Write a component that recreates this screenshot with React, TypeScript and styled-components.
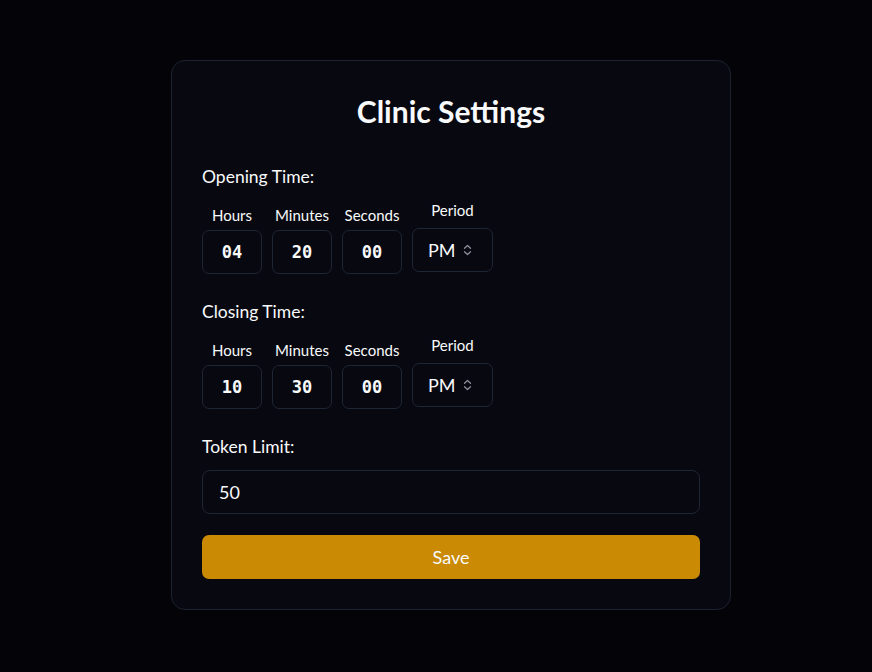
import React from "react";
import styled, { createGlobalStyle } from "styled-components";

const GlobalStyle = createGlobalStyle`
  html, body {
    margin: 0;
    padding: 0;
    background: #040408;
    font-family: Lato, "Noto Sans", sans-serif;
    color: #f8fafc;
  }
`;

const Page = styled.div`
  display: flex;
  justify-content: center;
  align-items: flex-start;
  padding: 60px 0 0 30px;
  min-height: 672px;
  box-sizing: border-box;
`;

const Card = styled.div`
  width: 560px;
  box-sizing: border-box;
  padding: 30px;
  background: #080810;
  border: 1px solid #1c2230;
  border-radius: 14px;
  display: flex;
  flex-direction: column;
`;

const Title = styled.h1`
  margin: 0 0 34px;
  text-align: center;
  font-size: 30px;
  line-height: 40px;
  font-weight: 700;
`;

const Section = styled.div<{ $gap: number }>`
  display: flex;
  flex-direction: column;
  margin-bottom: ${(p) => p.$gap}px;
`;

const Label = styled.div`
  font-size: 17.5px;
  line-height: 24px;
`;

const TimeRow = styled.div`
  display: flex;
  gap: 10px;
  margin-top: 11px;
  align-items: flex-start;
`;

const Field = styled.div<{ $shift: number }>`
  display: flex;
  flex-direction: column;
  align-items: center;
  margin-top: ${(p) => p.$shift}px;
`;

const SmallLabel = styled.div<{ $space: number }>`
  font-size: 15px;
  line-height: 20px;
  margin-bottom: ${(p) => p.$space}px;
`;

const Box = styled.div`
  width: 60px;
  height: 44px;
  box-sizing: border-box;
  border: 1px solid #1e2533;
  border-radius: 7px;
  display: flex;
  align-items: center;
  justify-content: center;
  font-family: "DejaVu Sans Mono", monospace;
  font-size: 17px;
  font-weight: 700;
`;

const Select = styled.div`
  width: 81px;
  height: 44px;
  box-sizing: border-box;
  border: 1px solid #1e2533;
  border-radius: 7px;
  display: flex;
  align-items: center;
  padding-left: 15px;
  gap: 7px;
  font-size: 18px;
`;

const Input = styled.div`
  margin-top: 11px;
  height: 44px;
  box-sizing: border-box;
  border: 1px solid #1e2533;
  border-radius: 8px;
  display: flex;
  align-items: center;
  padding-left: 16px;
  font-size: 18px;
`;

const SaveButton = styled.button`
  height: 44px;
  border: none;
  border-radius: 7px;
  background: #ca8a04;
  color: #f8fafc;
  font-family: Lato, "Noto Sans", sans-serif;
  font-size: 18px;
`;

const Chevron = () => (
  <svg width="9" height="12" viewBox="0 0 9 12" fill="none" stroke="#8b8f99" strokeWidth="1.3" strokeLinecap="round" strokeLinejoin="round">
    <path d="M1.5 4.2 L4.5 1.5 L7.5 4.2" />
    <path d="M1.5 7.8 L4.5 10.5 L7.5 7.8" />
  </svg>
);

const TimeGroup = ({ title, h, m, s, gap }: { title: string; h: string; m: string; s: string; gap: number }) => (
  <Section $gap={gap}>
    <Label>{title}</Label>
    <TimeRow>
      <Field $shift={5}>
        <SmallLabel $space={5}>Hours</SmallLabel>
        <Box>{h}</Box>
      </Field>
      <Field $shift={5}>
        <SmallLabel $space={5}>Minutes</SmallLabel>
        <Box>{m}</Box>
      </Field>
      <Field $shift={5}>
        <SmallLabel $space={5}>Seconds</SmallLabel>
        <Box>{s}</Box>
      </Field>
      <Field $shift={0}>
        <SmallLabel $space={8}>Period</SmallLabel>
        <Select>
          PM <Chevron />
        </Select>
      </Field>
    </TimeRow>
  </Section>
);

export default function App() {
  return (
    <>
      <GlobalStyle />
      <Page>
        <Card>
          <Title>Clinic Settings</Title>
          <TimeGroup title="Opening Time:" h="04" m="20" s="00" gap={26} />
          <TimeGroup title="Closing Time:" h="10" m="30" s="00" gap={26} />
          <Section $gap={21}>
            <Label>Token Limit:</Label>
            <Input>50</Input>
          </Section>
          <SaveButton>Save</SaveButton>
        </Card>
      </Page>
    </>
  );
}
